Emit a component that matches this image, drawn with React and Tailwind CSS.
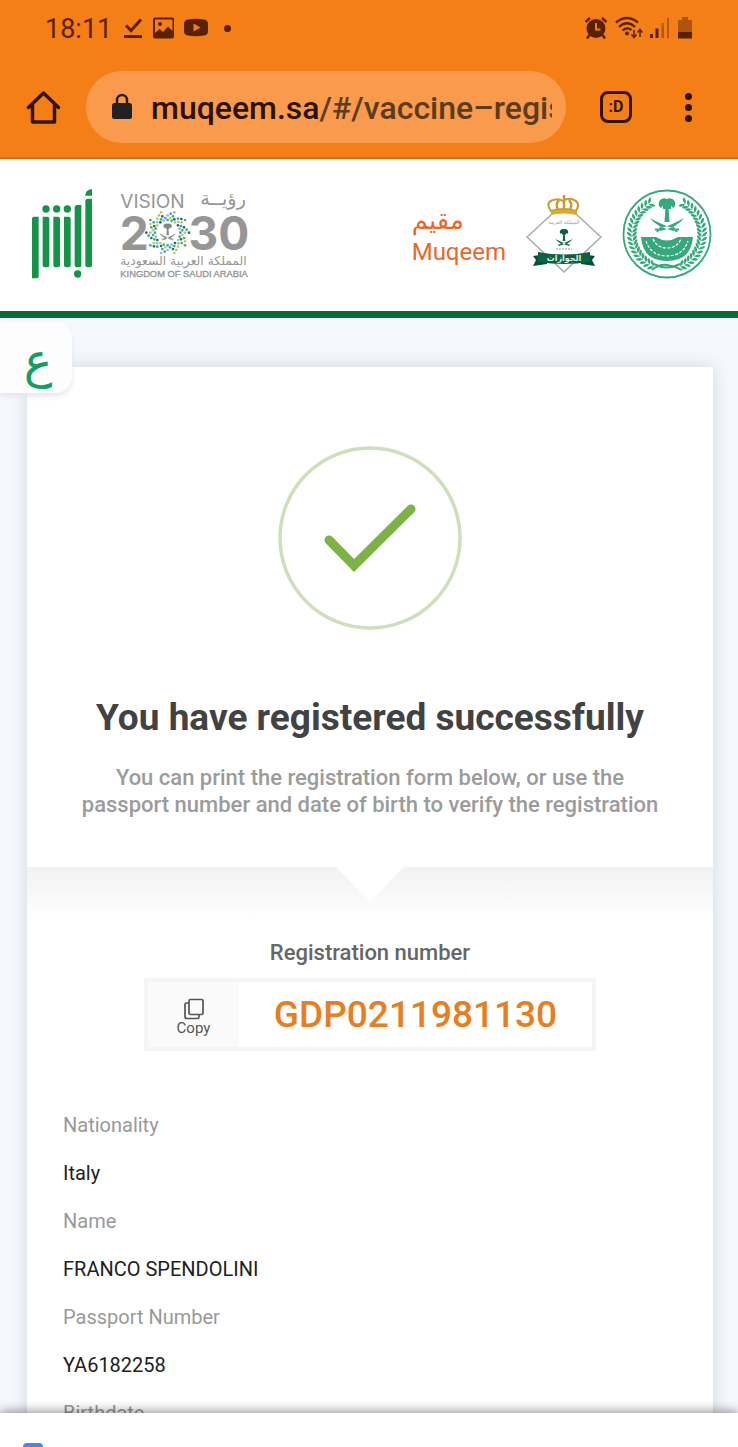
const details = [
  { label: 'Nationality', value: 'Italy' },
  { label: 'Name', value: 'FRANCO SPENDOLINI' },
  { label: 'Passport Number', value: 'YA6182258' },
  { label: 'Birthdate', value: '' },
];

const StatusBar = () => (
  <div className="flex h-14 shrink-0 items-center justify-between px-[45px] text-[#5a2100]">
    <div className="flex items-center gap-[7px]">
      <span className="mr-1 pt-0.5 text-[27px] leading-8">18:11</span>
      <svg className="h-6 w-5" viewBox="0 0 20 24" fill="none" stroke="currentColor" strokeWidth="3">
        <path d="M3 9.5 8 14.5 18 3.5M1 20.5H19" />
      </svg>
      <svg className="ml-0.5 h-6 w-6" viewBox="0 0 24 24" fill="currentColor">
        <path fillRule="evenodd" d="M3 1.5h17a2 2 0 0 1 2 2v17a2 2 0 0 1-2 2H3a2 2 0 0 1-2-2v-17a2 2 0 0 1 2-2Zm0 2V17l4.500-4 3.500 3 5-5.500 4.500 4.500V3.500H3Zm5 2.500a2 2 0 1 1 0 4 2 2 0 0 1 0-4Z" />
      </svg>
      <svg className="h-6 w-[26px]" viewBox="0 0 26 24" fill="currentColor">
        <path fillRule="evenodd" d="M5 3.500Q13 2 21 3.500Q25 4 25 8v7q0 4-4 4.500Q13 21 5 19.500Q1 19 1 15V8q0-4 4-4.500ZM10.500 7.500v8l7-4-7-4Z" />
      </svg>
      <span className="ml-2 size-[7px] rounded-full bg-current" />
    </div>
    <div className="flex items-center gap-[7px]">
      <svg className="size-6" viewBox="0 0 24 24" fill="none" stroke="currentColor" strokeWidth="2.500">
        <circle cx="12" cy="12.500" r="9.500" fill="currentColor" stroke="none" />
        <path d="M1.500 6 6 2M22.500 6 18 2M5.500 19 3 22.500M18.500 19 21 22.500" />
        <path d="M12 7v6.500h4.500" stroke="#f57f17" strokeWidth="2" />
      </svg>
      <svg className="h-6 w-7" viewBox="0 0 28 24" fill="none" stroke="currentColor" strokeWidth="2.300">
        <path d="M1 6.500Q12 -2.500 23 6.500M4 11Q12 3.500 20 11M7.500 14.500Q12 10.500 16.500 14" />
        <circle cx="12" cy="17.500" r="2" fill="currentColor" stroke="none" />
        <path d="M19 14v7M16.500 18.500 19 21.500 21.500 18.500M25 21v-7M22.500 16.500 25 13.500 27.500 16.500" strokeWidth="1.500" />
      </svg>
      <svg className="h-6 w-5" viewBox="0 0 20 24" fill="currentColor">
        <path d="M0 18h3v4H0ZM5.500 12.500h3V22h-3Z" />
        <path d="M11.500 7H14v15h-2.500ZM17 2h2v20h-2Z" opacity=".4" />
      </svg>
      <svg className="h-6 w-4" viewBox="0 0 16 24" fill="currentColor">
        <path d="M5 1h6v3h4v12H1V4h4Z" opacity=".45" />
        <path d="M1 16h14v6.500H1Z" />
      </svg>
    </div>
  </div>
);

const BrowserBar = () => (
  <div className="flex h-[103px] shrink-0 items-start gap-[26px] border-b-2 border-[#d2711c] pl-[26px] pr-[38px] pt-[15px] text-[#321500]">
    <a href="#home" aria-label="Home" className="flex h-[72px] items-center">
      <svg className="size-[34px]" viewBox="0 0 34 34" fill="none" stroke="currentColor" strokeWidth="3.500" strokeLinejoin="round" strokeLinecap="round">
        <path d="M2.500 17.500 17.500 3 32.500 17.500M6.500 15V32H28.500V15" />
      </svg>
    </a>
    <button type="button" className="flex h-[72px] min-w-0 flex-1 items-center rounded-full bg-[#f99a4c] pl-[25px] pr-[14px]">
      <svg className="h-7 w-[22px] shrink-0" viewBox="0 0 22 28">
        <rect x="1" y="10" width="20" height="16" rx="2.500" fill="#222" />
        <path d="M6 11V7a5 5 0 0 1 10 0v4" fill="none" stroke="#222" strokeWidth="2.500" />
      </svg>
      <span className="ml-[18px] min-w-0 flex-1 overflow-hidden whitespace-nowrap pt-0.5 text-left text-[32px] font-medium leading-10 text-[#5c3c1c]">
        <span className="text-[#2b1200]">muqeem.sa</span>/#/vaccine–regis
      </span>
    </button>
    <button type="button" className="ml-2 mt-5 flex size-8 items-center justify-center rounded-lg border-3 border-current text-base font-bold leading-none">
      :D
    </button>
    <button type="button" aria-label="Menu" className="ml-[18px] flex h-[72px] w-6 flex-col items-center justify-center gap-1">
      <span className="size-[7px] rounded-full bg-current" />
      <span className="size-[7px] rounded-full bg-current" />
      <span className="size-[7px] rounded-full bg-current" />
    </button>
  </div>
);

const AbsherLogo = () => (
  <svg className="h-[90px] w-[60px]" viewBox="96 57 180 270" fill="#159447">
    <path d="M96 146q0-6 6-6h14v179q0 6-6 6H96Z" />
    <path d="M128 140h14q6 0 6 6v140q0 6-6 6h-8q-6 0-6-6ZM160 140h14q6 0 6 6v140q0 6-6 6h-8q-6 0-6-6ZM192 140h14q6 0 6 6v140q0 6-6 6h-8q-6 0-6-6Z" />
    <path d="M224 113q0-8 8-8h12v181q0 6-6 6h-8q-6 0-6-6ZM256 94q0-8 8-8h12v200q0 6-6 6h-8q-6 0-6-6ZM256 77q0-18 20-20v20Z" />
    <circle cx="138" cy="117" r="11" />
    <circle cx="170" cy="117" r="11" />
    <circle cx="202" cy="117" r="11" />
    <circle cx="233" cy="312" r="11" />
  </svg>
);

// Palm tree above two crossed swords, centred on 0,0
const PalmAndSwords = () => (
  <g>
    <path d="M-1.500-13h3L2.500 2h-5ZM0-21c3-2 7 0 8 3 1 2 0 5-2 6-1-2-3-3-6-3s-5 1-6 3c-2-1-3-4-2-6 1-3 5-5 8-3Z" />
    <path d="M-4-17h8v6h-8Z" />
    <path d="M-17-2Q-7 4 8 9L7 11Q-11 7-17-2ZM17-2Q7 4-8 9L-7 11Q11 7 17-2Z" />
    <path d="M5 6 10 12M-5 6-10 12M9 9.500h3M-9 9.500h-3" stroke="currentColor" strokeWidth="1.800" />
  </g>
);

const ringColors = ['#4fa85a', '#39a6c9', '#c5cf3d', '#1d6a6f', '#7cc5dc'];

const VisionLogo = () => {
  const dots = [];
  [38, 45, 52, 58, 64].forEach((radius, ring) => {
    for (let i = 0; i < 20; i++) {
      if (ring > 2 && i % 2 !== ring % 2) continue;
      const angle = ((i + (ring % 2) / 2) * Math.PI) / 10;
      dots.push({
        x: Math.round(503 + radius * Math.cos(angle)),
        y: Math.round(190 + radius * Math.sin(angle)),
        color: ringColors[(i + ring * 2) % 5],
      });
    }
  });

  return (
    <svg className="h-[88px] w-[130px] overflow-visible" viewBox="360 62 390 264" fill="#969696">
      <text x="361" y="116" fontSize="57" className="font-[Inter,sans-serif]">VISION</text>
      <text x="738" y="108" fontSize="58" textAnchor="end" className="font-['DejaVu_Sans',sans-serif]">رؤيــة</text>
      <text x="359" y="241" fontSize="138" fontWeight="700" className="font-[Inter,sans-serif]">2</text>
      <text x="748" y="241" fontSize="138" fontWeight="700" textAnchor="end" className="font-[Inter,sans-serif]">30</text>
      <circle cx="503" cy="190" r="66" fill="#fff" />
      {dots.map((dot, index) => (
        <circle key={index} cx={dot.x} cy={dot.y} r="4" fill={dot.color} />
      ))}
      <g transform="translate(503 195) scale(1.500)" color="#858585" fill="currentColor">
        <PalmAndSwords />
      </g>
      <text x="740" y="287" fontSize="37" textAnchor="end" className="font-['DejaVu_Sans',sans-serif]">المملكة العربية السعودية</text>
      <text x="361" y="322" fontSize="28" stroke="#969696" strokeWidth="1" className="font-['Liberation_Sans',sans-serif]">KINGDOM OF SAUDI ARABIA</text>
    </svg>
  );
};

const PassportsLogo = () => (
  <svg className="h-[78px] w-[76px]" viewBox="11 15 76 78" fill="none">
    <path d="M49 23 86 57 49 92 12 57Z" stroke="#aaa" strokeWidth="1.500" />
    <path d="M36 31Q30 22 38 20q6-2 10 1 6-4 11-1 7 3 2 11-12-4-25 0Z" fill="#fff" stroke="#c99c2e" strokeWidth="2" />
    <path d="M43 30Q40 24 44 20M55 30q3-6-1-10M49 30V19M36 33q13-4 26 0M49 15v4" stroke="#c99c2e" strokeWidth="2.500" />
    <path d="M36 31q13-3 26 0v4q-13-3-26 0Z" fill="#d9aa38" />
    <text x="49" y="44" fontSize="5" textAnchor="middle" fill="#999" className="font-['DejaVu_Sans',sans-serif]">المملكة العربية</text>
    <g transform="translate(49 60) scale(.5)" color="#08633c" fill="currentColor">
      <PalmAndSwords />
    </g>
    <path d="M41 69h16" stroke="#999" strokeWidth="1" strokeDasharray="2 1" />
    <path d="M25 75 18 76 21 80 18 86 32 84V79ZM73 75 80 76 77 80 80 86 66 84V79Z" fill="#075035" />
    <path d="M23 72q26 5 52 0v10q-26 4-52 0Z" fill="#0b6440" />
    <text x="49" y="81" fontSize="8" fontWeight="700" textAnchor="middle" fill="#e4eee8" className="font-['DejaVu_Sans',sans-serif]">الجوازات</text>
  </svg>
);

const MinistryLogo = () => {
  const leaves = [];
  for (let i = 0; i < 19; i++) {
    leaves.push(-60 + i * 7);
  }

  const branch = leaves.map((angle) => (
    <g key={angle} transform={`rotate(${angle}) translate(35 0)`}>
      <path d="M0 1Q1-4 5-4 5 0 0 1ZM0 1Q-1-4-5-4-5 0 0 1Z" />
    </g>
  ));

  return (
    <svg className="size-[90px]" viewBox="-45 -45 90 90" color="#35a97d" fill="currentColor">
      <circle r="43.500" fill="none" stroke="currentColor" strokeWidth="1.800" />
      {branch}
      <g transform="scale(-1 1)">{branch}</g>
      <g transform="translate(0 -14)">
        <PalmAndSwords />
      </g>
      <path d="M-26 3h15q11 7 22 0h15Q24 27 0 27T-26 3Z" />
      <path d="M-21 7Q-16 22 0 22T21 7M-14 5Q-10 14 0 14T14 5" fill="none" stroke="#fff" strokeWidth="1.200" strokeDasharray="3 1.500" />
      <path d="M-15 36Q-8 30 0 31t15 5M-13 30Q0 37 13 30" fill="none" stroke="currentColor" strokeWidth="2" />
    </svg>
  );
};

const SiteHeader = () => (
  <header className="flex h-[159px] shrink-0 items-center justify-between border-b-7 border-[#0b6a3e] bg-white pb-0.5 pl-8 pr-[26px]">
    <div className="flex items-center gap-7">
      <AbsherLogo />
      <VisionLogo />
    </div>
    <div className="flex items-center gap-5">
      <div className="flex flex-col items-start pt-1 text-[#e8682a]">
        <span className="font-['DejaVu_Sans',sans-serif] text-[26px] leading-8">مقيم</span>
        <span className="text-2xl leading-8">Muqeem</span>
      </div>
      <PassportsLogo />
      <MinistryLogo />
    </div>
  </header>
);

const App = () => {
  return (
    <div className="flex h-screen flex-col overflow-hidden bg-[#f57f17] font-[Roboto,sans-serif]">
      <StatusBar />
      <BrowserBar />
      <SiteHeader />

      <main className="relative min-h-0 flex-1 overflow-hidden bg-[#f5f8fc] pl-[27px] pr-[25px] pt-[49px]">
        <button type="button" className="absolute left-0 top-1 flex h-[71px] w-[72px] items-center justify-center rounded-r-2xl bg-[#fdfdfd] pl-1 pt-1 font-['DejaVu_Sans',sans-serif] text-5xl leading-none text-[#10a064] shadow-md shadow-gray-200">
          ع
        </button>

        <section className="flex min-h-full flex-col bg-white shadow-[0_0_16px_#d0d8e2]">
          <div className="flex flex-col items-center px-9 pb-[49px] pt-[79px] text-center">
            <svg className="size-[184px]" viewBox="0 0 184 184" fill="none">
              <circle cx="92" cy="92" r="90" stroke="#cde0b9" strokeWidth="3.500" />
              <path d="M51 94 76 119.500 133 63" stroke="#7cb342" strokeWidth="9" strokeLinecap="round" />
            </svg>
            <h1 className="mt-16 text-[37px] font-bold leading-12 text-[#424242]">You have registered successfully</h1>
            <p className="mt-[22px] max-w-[596px] text-[22px] font-medium leading-[27px] text-[#9b9b9b]">
              You can print the registration form below, or use the passport number and date of birth to verify the registration
            </p>
          </div>

          <div className="flex h-14 justify-center bg-linear-to-b from-[#f2f2f2] to-white">
            <svg className="h-[35px] w-[68px]" viewBox="0 0 68 35" fill="#fff">
              <path d="M0 0H68L34 35Z" />
            </svg>
          </div>

          <div className="mt-4 flex flex-col items-center px-9">
            <h2 className="text-[22px] font-medium leading-7 text-[#666]">Registration number</h2>
            <div className="mt-[11px] flex h-[73px] w-[452px] max-w-full border-4 border-[#f5f5f5]">
              <button type="button" className="flex w-[91px] shrink-0 flex-col items-center justify-center bg-[#fafafa] pt-1 text-[#555]">
                <svg className="size-[22px]" viewBox="0 0 22 22" fill="none" stroke="currentColor" strokeWidth="1.700">
                  <rect x="6" y="1.500" width="14" height="15" rx="1.500" />
                  <path d="M6 5H3.500Q2 5 2 6.500v12Q2 20.500 4 20.500H14.500Q16 20.500 16 19V16.500" />
                </svg>
                <span className="text-[15px] leading-4">Copy</span>
              </button>
              <span className="flex flex-1 items-center justify-center text-[37px] font-medium leading-none text-[#e67e22]">GDP0211981130</span>
            </div>
          </div>

          <dl className="mt-[61px] px-9 text-xl">
            {details.map((item) => (
              <div key={item.label}>
                <dt className="h-12 leading-[27px] text-[#999]">{item.label}</dt>
                <dd className="h-12 leading-[27px] text-[#212121]">{item.value}</dd>
              </div>
            ))}
          </dl>
        </section>
      </main>

      <footer className="relative flex h-[34px] shrink-0 items-end bg-white px-[23px] shadow-[0_-2px_10px_#00000066]">
        <span className="h-1 w-5 rounded-t bg-[#4a86e8]" />
      </footer>
    </div>
  );
};

export default App;
